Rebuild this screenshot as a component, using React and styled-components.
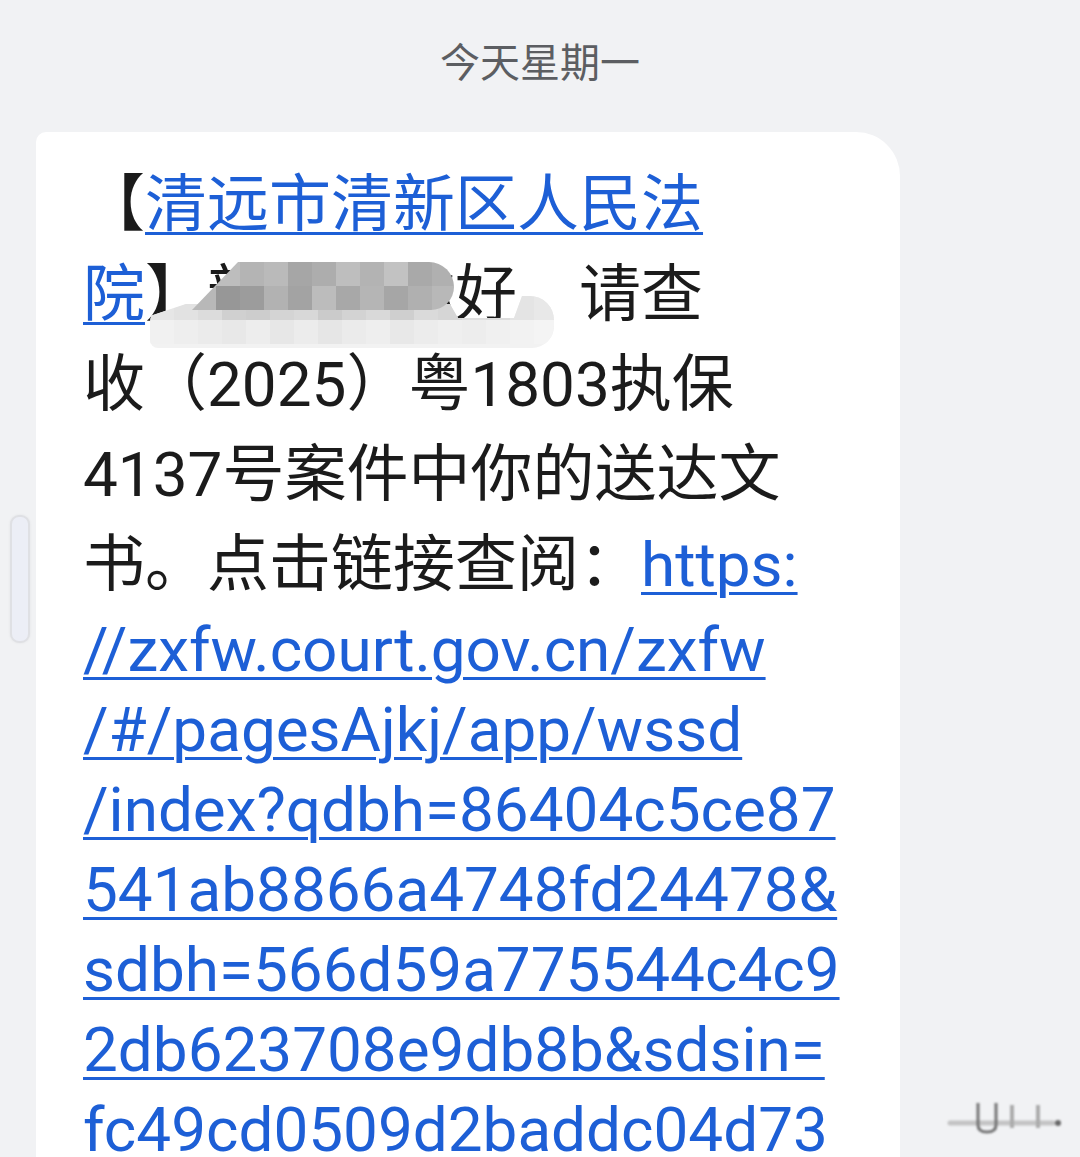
import React from "react";
import styled, { createGlobalStyle } from "styled-components";

const GlobalStyle = createGlobalStyle`
  html, body {
    margin: 0;
    padding: 0;
    overflow: hidden;
    background: #f1f2f4;
  }
`;

const Page = styled.div`
  position: relative;
  width: 1080px;
  height: 1157px;
  overflow: hidden;
  background: #f1f2f4;
  font-family: Roboto, "Noto Sans CJK SC", sans-serif;
`;

const DateHeader = styled.div`
  height: 132px;
  box-sizing: border-box;
  padding-top: 38px;
  display: flex;
  justify-content: center;
  font-family: "Noto Sans CJK SC", sans-serif;
  font-size: 40px;
  line-height: 44px;
  color: #5c5e62;
`;

const Bubble = styled.div`
  position: relative;
  margin-left: 36px;
  width: 864px;
  box-sizing: border-box;
  padding: 28px 0 0 47px;
  background: #ffffff;
  border-radius: 10px 44px 0 0;
  color: #1b1b1b;
  font-size: 62px;
`;

const Line = styled.div`
  height: ${(p) => p.$h}px;
  line-height: ${(p) => p.$h}px;
  white-space: nowrap;
`;

const Link = styled.span`
  color: #1d5fd6;
  text-decoration: underline;
  text-decoration-thickness: 3px;
  text-underline-offset: 6px;
`;

const Mosaic = styled.div`
  position: absolute;
  left: 114px;
  top: 126px;
  width: 410px;
  height: 92px;
  pointer-events: none;
  filter: blur(0.7px);
`;

const Band = styled.div`
  position: absolute;
  left: ${(p) => p.$x}px;
  top: ${(p) => p.$y}px;
  width: ${(p) => p.$w}px;
  height: ${(p) => p.$hh}px;
  display: grid;
  grid-template-columns: repeat(${(p) => p.$cols}, 24px);
  grid-auto-rows: 24px;
  overflow: hidden;
  background: ${(p) => p.$bg};
  border-radius: ${(p) => p.$radius};
  clip-path: ${(p) => p.$clip || "none"};
`;

const Cell = styled.div`
  background: ${(p) => p.$c};
`;

const ScrollPill = styled.div`
  position: absolute;
  left: 10px;
  top: 515px;
  width: 16px;
  height: 124px;
  border-radius: 9px;
  background: #eceef6;
  border: 2px solid #dfe0e4;
  box-shadow: 0 0 3px rgba(0, 0, 0, 0.06);
`;

const Watermark = styled.svg`
  position: absolute;
  left: 945px;
  top: 1095px;
  width: 120px;
  height: 55px;
  filter: blur(0.8px);
  opacity: 0.8;
`;

const darkRows = [
  ["#c8c8c8", "#bdbdbd", "#b4b4b4", "#bababa", "#a6a6a6", "#adadad", "#bebebe", "#b3b3b3", "#c2c2c2", "#a9a9a9", "#b0b0b0", "#c6c6c6"],
  ["#b8b8b8", "#979797", "#9c9c9c", "#b2b2b2", "#a3a3a3", "#bcbcbc", "#a8a8a8", "#b5b5b5", "#a6a6a6", "#b0b0b0", "#b8b8b8", "#c2c2c2"],
];

const lightRows = [
  ["#e6e6e6", "#e2e2e2", "#dcdcdc", "#d0d0d0", "#cdcdcd", "#d4d4d4", "#d8d8d8", "#cbcbcb", "#d3d3d3", "#d9d9d9", "#cfcfcf", "#dadada", "#d6d6d6", "#dfdfdf", "#dcdcdc", "#e4e4e4", "#e8e8e8"],
  ["#f1f1f1", "#eeeeee", "#ebebeb", "#e8e8e8", "#ededed", "#e7e7e7", "#ececec", "#e6e6e6", "#ebebeb", "#eeeeee", "#e8e8e8", "#ececec", "#efefef", "#ededed", "#f0f0f0", "#f2f2f2", "#f4f4f4"],
];

const urlLines = [
  "//zxfw.court.gov.cn/zxfw",
  "/#/pagesAjkj/app/wssd",
  "/index?qdbh=86404c5ce87",
  "541ab8866a4748fd24478&",
  "sdbh=566d59a775544c4c9",
  "2db623708e9db8b&sdsin=",
  "fc49cd0509d2baddc04d73",
];

function BlurPatch() {
  return (
    <Mosaic>
      <Band
        $x={0}
        $y={38}
        $w={404}
        $hh={52}
        $cols={17}
        $bg="#f2f2f2"
        $radius="28px 24px 22px 8px"
        $clip="polygon(0 20px, 36px 8px, 300px 8px, 308px 22px, 364px 22px, 372px 0, 100% 0, 100% 100%, 0 100%)"
      >
        {lightRows.flat().map((c, i) => (
          <Cell key={i} $c={c} />
        ))}
      </Band>
      <Band
        $x={42}
        $y={4}
        $w={262}
        $hh={48}
        $cols={12}
        $bg="transparent"
        $radius="6px 26px 24px 0"
        $clip="polygon(0 100%, 46px 0, 100% 0, 100% 100%)"
      >
        {darkRows.flat().map((c, i) => (
          <Cell key={i} $c={c} />
        ))}
      </Band>
    </Mosaic>
  );
}

export default function App() {
  return (
    <Page>
      <GlobalStyle />
      <DateHeader>今天星期一</DateHeader>
      <Bubble>
        <Line $h={90}>
          【<Link>清远市清新区人民法</Link>
        </Line>
        <Line $h={90}>
          <Link>院</Link>】新某某你好，请查
        </Line>
        <Line $h={90}>收（2025）粤1803执保</Line>
        <Line $h={90}>4137号案件中你的送达文</Line>
        <Line $h={90}>
          书。点击链接查阅：<Link>https:</Link>
        </Line>
        {urlLines.map((t) => (
          <Line key={t} $h={80}>
            <Link>{t}</Link>
          </Line>
        ))}
        <BlurPatch />
      </Bubble>
      <ScrollPill />
      <Watermark viewBox="0 0 120 55">
        <path d="M5 28 H108" stroke="#b8b8b8" strokeWidth="5" strokeLinecap="round" />
        <path d="M33 8 V30 Q33 37 42 37 Q51 37 51 30 V8" stroke="#555" strokeWidth="3" fill="none" />
        <path d="M67 10 V33" stroke="#999" strokeWidth="4" />
        <path d="M93 10 V33" stroke="#999" strokeWidth="4" />
        <circle cx="113" cy="28" r="3" fill="#444" />
      </Watermark>
    </Page>
  );
}
